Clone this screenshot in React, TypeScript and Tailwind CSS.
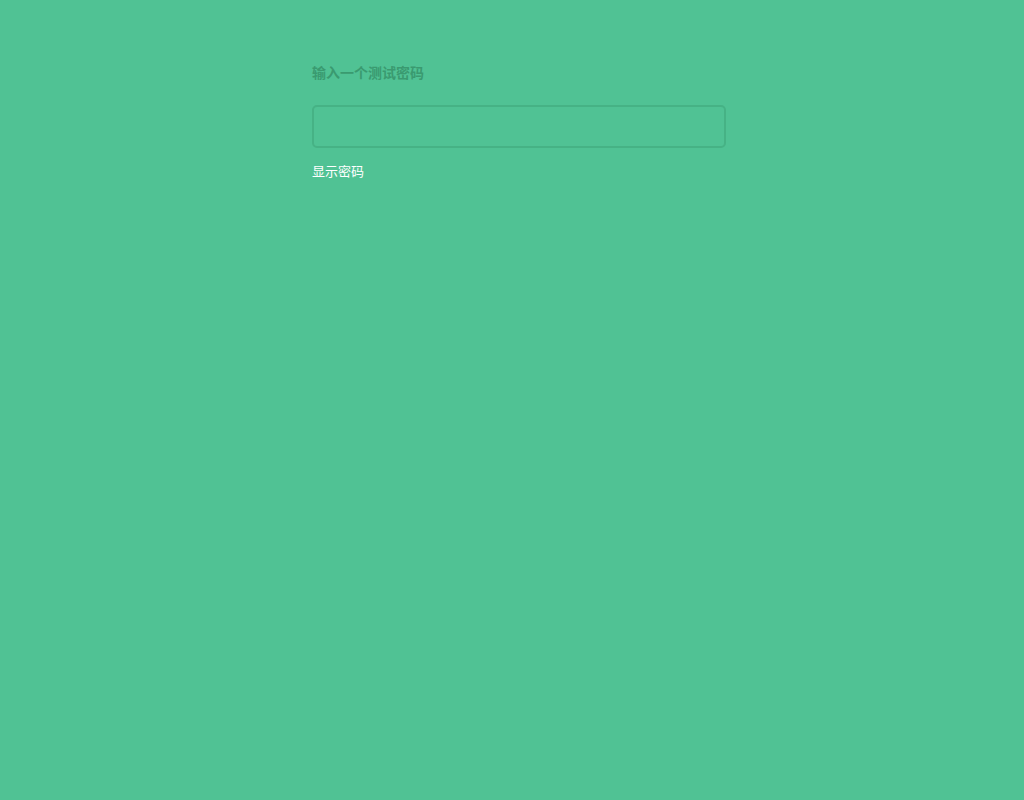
import { useState } from "react";

export default function App() {
  const [show, setShow] = useState(false);
  const [value, setValue] = useState("");

  return (
    <div
      className="min-h-[800px] w-full bg-[#50c294]"
      style={{ fontFamily: '"Liberation Sans", "Noto Sans CJK SC", sans-serif' }}
    >
      <div className="ml-[312px] w-[414px] pt-[64px]">
        <label className="block text-[14px] leading-[18px] font-bold text-[#3a9a70]">
          输入一个测试密码
        </label>
        <input
          type={show ? "text" : "password"}
          value={value}
          onChange={(e) => setValue(e.target.value)}
          className="mt-[23px] block h-[43px] w-full rounded-[5px] border-2 border-[#46b285] bg-transparent px-3 text-[14px] text-white outline-none"
        />
        <button
          type="button"
          onClick={() => setShow(!show)}
          className="mt-[16px] block text-[13px] leading-[16px] text-white"
        >
          显示密码
        </button>
      </div>
    </div>
  );
}
